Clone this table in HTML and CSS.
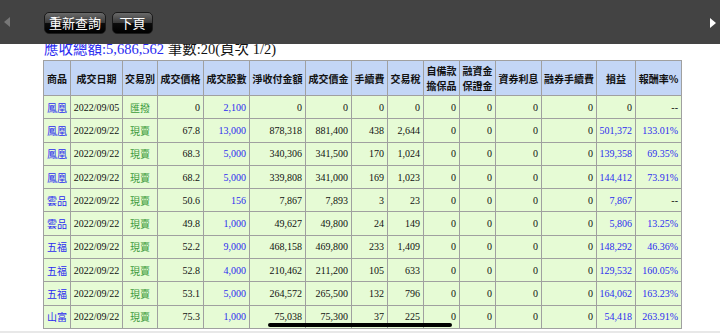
FILE: index.html
```html
<!DOCTYPE html>
<html lang="zh-TW">
<head>
  <meta charset="UTF-8">
  <meta name="viewport" content="width=device-width, initial-scale=1.0">
  <title>交易明細</title>
  <link rel="stylesheet" href="styles.css">
</head>
<body>
  <div class="toolbar">
    <span class="arrow arrow-left"></span>
    <button class="btn btn-wide">重新查詢</button>
    <button class="btn btn-narrow">下頁</button>
    <span class="arrow arrow-right"></span>
  </div>

  <div class="page">
    <div class="summary"><span class="blue">應收總額:5,686,562</span> 筆數:20(頁次 1/2)</div>

    <table class="trades">
      <colgroup>
        <col style="width:27px"><col style="width:52px"><col style="width:35px"><col style="width:46px">
        <col style="width:46px"><col style="width:56px"><col style="width:46px"><col style="width:36px">
        <col style="width:36px"><col style="width:36px"><col style="width:36px"><col style="width:46px">
        <col style="width:55px"><col style="width:39px"><col style="width:46px">
      </colgroup>
      <thead>
        <tr>
          <th>商品</th><th>成交日期</th><th>交易別</th><th>成交價格</th><th>成交股數</th>
          <th>淨收付金額</th><th>成交價金</th><th>手續費</th><th>交易稅</th>
          <th>自備款<br>擔保品</th><th>融資金<br>保證金</th><th>資券利息</th><th>融券手續費</th>
          <th>損益</th><th>報酬率%</th>
        </tr>
      </thead>
      <tbody>
        <tr>
          <td class="name">鳳凰</td><td class="date">2022/09/05</td><td class="kind">匯撥</td>
          <td>0</td><td class="blue">2,100</td><td>0</td><td>0</td><td>0</td><td>0</td>
          <td>0</td><td>0</td><td>0</td><td>0</td><td>0</td><td>--</td>
        </tr>
        <tr>
          <td class="name">鳳凰</td><td class="date">2022/09/22</td><td class="kind">現賣</td>
          <td>67.8</td><td class="blue">13,000</td><td>878,318</td><td>881,400</td><td>438</td><td>2,644</td>
          <td>0</td><td>0</td><td>0</td><td>0</td><td class="blue">501,372</td><td class="blue">133.01%</td>
        </tr>
        <tr>
          <td class="name">鳳凰</td><td class="date">2022/09/22</td><td class="kind">現賣</td>
          <td>68.3</td><td class="blue">5,000</td><td>340,306</td><td>341,500</td><td>170</td><td>1,024</td>
          <td>0</td><td>0</td><td>0</td><td>0</td><td class="blue">139,358</td><td class="blue">69.35%</td>
        </tr>
        <tr>
          <td class="name">鳳凰</td><td class="date">2022/09/22</td><td class="kind">現賣</td>
          <td>68.2</td><td class="blue">5,000</td><td>339,808</td><td>341,000</td><td>169</td><td>1,023</td>
          <td>0</td><td>0</td><td>0</td><td>0</td><td class="blue">144,412</td><td class="blue">73.91%</td>
        </tr>
        <tr>
          <td class="name">雲品</td><td class="date">2022/09/22</td><td class="kind">現賣</td>
          <td>50.6</td><td class="blue">156</td><td>7,867</td><td>7,893</td><td>3</td><td>23</td>
          <td>0</td><td>0</td><td>0</td><td>0</td><td class="blue">7,867</td><td>--</td>
        </tr>
        <tr>
          <td class="name">雲品</td><td class="date">2022/09/22</td><td class="kind">現賣</td>
          <td>49.8</td><td class="blue">1,000</td><td>49,627</td><td>49,800</td><td>24</td><td>149</td>
          <td>0</td><td>0</td><td>0</td><td>0</td><td class="blue">5,806</td><td class="blue">13.25%</td>
        </tr>
        <tr>
          <td class="name">五福</td><td class="date">2022/09/22</td><td class="kind">現賣</td>
          <td>52.2</td><td class="blue">9,000</td><td>468,158</td><td>469,800</td><td>233</td><td>1,409</td>
          <td>0</td><td>0</td><td>0</td><td>0</td><td class="blue">148,292</td><td class="blue">46.36%</td>
        </tr>
        <tr>
          <td class="name">五福</td><td class="date">2022/09/22</td><td class="kind">現賣</td>
          <td>52.8</td><td class="blue">4,000</td><td>210,462</td><td>211,200</td><td>105</td><td>633</td>
          <td>0</td><td>0</td><td>0</td><td>0</td><td class="blue">129,532</td><td class="blue">160.05%</td>
        </tr>
        <tr>
          <td class="name">五福</td><td class="date">2022/09/22</td><td class="kind">現賣</td>
          <td>53.1</td><td class="blue">5,000</td><td>264,572</td><td>265,500</td><td>132</td><td>796</td>
          <td>0</td><td>0</td><td>0</td><td>0</td><td class="blue">164,062</td><td class="blue">163.23%</td>
        </tr>
        <tr>
          <td class="name">山富</td><td class="date">2022/09/22</td><td class="kind">現賣</td>
          <td>75.3</td><td class="blue">1,000</td><td>75,038</td><td>75,300</td><td>37</td><td>225</td>
          <td>0</td><td>0</td><td>0</td><td>0</td><td class="blue">54,418</td><td class="blue">263.91%</td>
        </tr>
      </tbody>
    </table>
  </div>

  <div class="bottom-strip"></div>
  <div class="home-indicator"></div>
</body>
</html>
```

FILE: styles.css
```css
body {
  margin: 0;
  padding: 0;
  background-color: #fff;
  color: #111;
  font-family: 'Liberation Serif', 'Noto Sans CJK TC', serif;
  overflow: hidden;
}
.toolbar {
  position: fixed;
  top: 0;
  left: 0;
  right: 0;
  height: 44px;
  background-color: #434343;
  display: flex;
  align-items: center;
  gap: 6px;
  padding-left: 44px;
  box-sizing: border-box;
  z-index: 2;
}
.arrow {
  position: absolute;
  top: 17px;
  width: 0;
  height: 0;
  border-top: 5px solid transparent;
  border-bottom: 5px solid transparent;
}
.arrow-left {
  left: 4px;
  border-right: 6px solid #777;
}
.arrow-right {
  right: 4px;
  top: 18px;
  border-left: 6px solid #fff;
}
.btn {
  height: 22px;
  padding: 0;
  margin-top: 2px;
  border: 1px solid #1a1a1a;
  border-radius: 5px;
  background: linear-gradient(to bottom, #6a6a6a 0%, #3a3a3a 48%, #0c0c0c 52%, #000 100%);
  color: #fff;
  font-family: 'Noto Sans CJK TC', sans-serif;
  font-size: 13px;
  line-height: 20px;
  text-align: center;
}
.btn-wide {
  width: 62px;
}
.btn-narrow {
  width: 41px;
}
.page {
  padding: 40px 0 0 43px;
}
.summary {
  font-size: 14.5px;
  line-height: 19px;
  height: 20px;
  padding-left: 1px;
  white-space: nowrap;
}
.blue {
  color: #2b2bf0;
}
.trades {
  border-collapse: collapse;
  table-layout: fixed;
  width: 638px;
  font-size: 10px;
  border: 1px solid #a8a8a8;
}
.trades th {
  background-color: #c3d6f6;
  font-family: 'Noto Sans CJK TC', sans-serif;
  font-size: 10px;
  font-weight: bold;
  line-height: 15px;
  height: 34px;
  padding: 0;
  border: 1px solid #a0a0a0;
  white-space: nowrap;
  text-align: center;
}
.trades td {
  background-color: #e6fbd5;
  height: 22.3px;
  padding: 0 3px 0 0;
  border: 1px solid #a0a0a0;
  text-align: right;
  white-space: nowrap;
  overflow: hidden;
}
.trades td.name {
  color: #2b2bf0;
  font-family: 'Noto Sans CJK TC', sans-serif;
  font-size: 10px;
  text-align: center;
  padding: 0;
}
.trades td.date {
  text-align: center;
  padding: 0;
}
.trades td.kind {
  color: #3c9a3c;
  font-family: 'Noto Sans CJK TC', sans-serif;
  font-size: 10px;
  text-align: center;
  padding: 0;
}
.bottom-strip {
  position: fixed;
  left: 0;
  right: 0;
  bottom: 0;
  height: 2px;
  background-color: #e8e8e8;
}
.home-indicator {
  position: fixed;
  left: 268px;
  bottom: 6px;
  width: 184px;
  height: 4px;
  border-radius: 2px;
  background-color: #000;
}
```
